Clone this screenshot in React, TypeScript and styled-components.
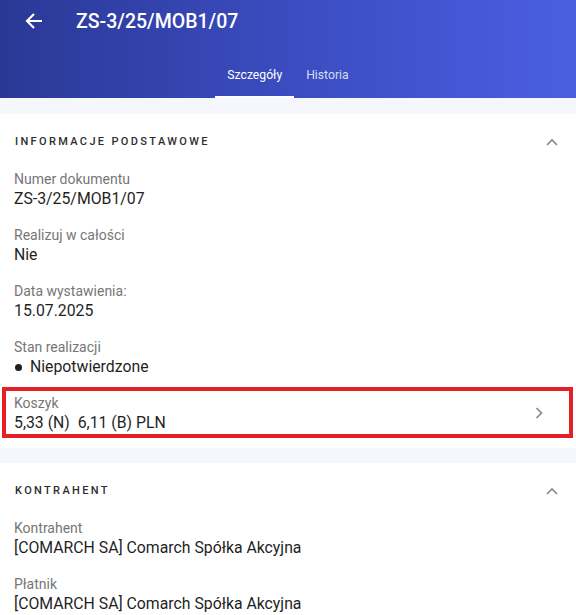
import React from "react";
import styled, { createGlobalStyle } from "styled-components";

const GlobalStyle = createGlobalStyle`
    html, body {
        margin: 0;
        padding: 0;
        background: #f6f7fc;
        font-family: Roboto, "Noto Sans", sans-serif;
    }
`;

const Page = styled.div`
    width: 576px;
    min-height: 615px;
    background: #f6f7fc;
`;

const Header = styled.header`
    height: 98px;
    background: linear-gradient(90deg, #2a3895 0%, #3b4cc0 50%, #4a5ee2 100%);
    color: #fff;
    display: flex;
    flex-direction: column;
`;

const TitleRow = styled.div`
    height: 42px;
    display: flex;
    align-items: center;
    padding-left: 24px;
`;

const BackButton = styled.button`
    width: 20px;
    height: 20px;
    padding: 0;
    border: none;
    background: none;
    color: #fff;
    display: flex;
    align-items: center;
    justify-content: center;
`;

const Title = styled.h1`
    margin: 0 0 0 32px;
    font-size: 19.5px;
    font-weight: 500;
`;

const Tabs = styled.nav`
    margin-top: auto;
    display: flex;
    justify-content: center;
`;

const Tab = styled.div<{ $active?: boolean }>`
    height: 44px;
    padding: 0 12px;
    box-sizing: border-box;
    display: flex;
    align-items: center;
    font-size: 12.2px;
    color: ${(p) => (p.$active ? "#ffffff" : "rgba(255,255,255,0.8)")};
    border-bottom: 2px solid ${(p) => (p.$active ? "#ffffff" : "transparent")};
`;

const Content = styled.main`
    padding-top: 16px;
    display: flex;
    flex-direction: column;
    gap: 15px;
`;

const Card = styled.section`
    background: #fff;
    padding-bottom: 15px;
`;

const CardHeader = styled.div`
    height: 55px;
    display: flex;
    align-items: center;
    justify-content: space-between;
    padding: 0 15px;
`;

const CardTitle = styled.h2`
    margin: 0;
    font-size: 11px;
    font-weight: 500;
    letter-spacing: 2.35px;
    color: #2e2e2e;
`;

const Field = styled.div`
    position: relative;
    padding: 0 15px 0 14px;
    display: flex;
    align-items: center;
    & + & {
        margin-top: 16px;
    }
`;

const FieldBody = styled.div`
    flex: 1;
    display: flex;
    flex-direction: column;
`;

const Label = styled.span`
    font-size: 14px;
    line-height: 20px;
    color: #767676;
`;

const Value = styled.span`
    font-size: 15.8px;
    line-height: 20px;
    color: #1f1f1f;
    display: flex;
    align-items: center;
`;

const Dot = styled.span`
    width: 7px;
    height: 7px;
    border-radius: 50%;
    background: #1f1f1f;
    margin: 0 8px 0 1px;
`;

const Highlight = styled.div`
    position: absolute;
    top: -6px;
    bottom: -5px;
    left: 2px;
    right: 3px;
    border: 4px solid #e41f26;
    pointer-events: none;
`;

const ChevronBox = styled.span<{ $right?: number }>`
    display: flex;
    color: #8a8a8a;
    margin-right: ${(p) => p.$right ?? 0}px;
`;

const ChevronUp = () => (
    <ChevronBox $right={3}>
        <svg width="12" height="8" viewBox="0 0 12 8" fill="none">
            <path d="M1 7L6 2L11 7" stroke="currentColor" strokeWidth="1.7" />
        </svg>
    </ChevronBox>
);

const ChevronRight = () => (
    <ChevronBox $right={18}>
        <svg width="8" height="12" viewBox="0 0 8 12" fill="none">
            <path d="M1.5 1L6.5 6L1.5 11" stroke="currentColor" strokeWidth="1.7" />
        </svg>
    </ChevronBox>
);

const BackArrow = () => (
    <svg width="18" height="18" viewBox="0 0 18 18" fill="none">
        <path d="M17 9H2M9 2L2 9L9 16" stroke="currentColor" strokeWidth="2.2" />
    </svg>
);

export default function App() {
    return (
        <Page>
            <GlobalStyle />
            <Header>
                <TitleRow>
                    <BackButton>
                        <BackArrow />
                    </BackButton>
                    <Title>ZS-3/25/MOB1/07</Title>
                </TitleRow>
                <Tabs>
                    <Tab $active>Szczegóły</Tab>
                    <Tab>Historia</Tab>
                </Tabs>
            </Header>
            <Content>
                <Card>
                    <CardHeader>
                        <CardTitle>INFORMACJE PODSTAWOWE</CardTitle>
                        <ChevronUp />
                    </CardHeader>
                    <Field>
                        <FieldBody>
                            <Label>Numer dokumentu</Label>
                            <Value>ZS-3/25/MOB1/07</Value>
                        </FieldBody>
                    </Field>
                    <Field>
                        <FieldBody>
                            <Label>Realizuj w całości</Label>
                            <Value>Nie</Value>
                        </FieldBody>
                    </Field>
                    <Field>
                        <FieldBody>
                            <Label>Data wystawienia:</Label>
                            <Value>15.07.2025</Value>
                        </FieldBody>
                    </Field>
                    <Field>
                        <FieldBody>
                            <Label>Stan realizacji</Label>
                            <Value>
                                <Dot />
                                Niepotwierdzone
                            </Value>
                        </FieldBody>
                    </Field>
                    <Field>
                        <FieldBody>
                            <Label>Koszyk</Label>
                            <Value>5,33 (N)&nbsp;&nbsp;6,11 (B) PLN</Value>
                        </FieldBody>
                        <ChevronRight />
                        <Highlight />
                    </Field>
                </Card>
                <Card>
                    <CardHeader>
                        <CardTitle>KONTRAHENT</CardTitle>
                        <ChevronUp />
                    </CardHeader>
                    <Field>
                        <FieldBody>
                            <Label>Kontrahent</Label>
                            <Value>[COMARCH SA] Comarch Spółka Akcyjna</Value>
                        </FieldBody>
                    </Field>
                    <Field>
                        <FieldBody>
                            <Label>Płatnik</Label>
                            <Value>[COMARCH SA] Comarch Spółka Akcyjna</Value>
                        </FieldBody>
                    </Field>
                </Card>
            </Content>
        </Page>
    );
}
